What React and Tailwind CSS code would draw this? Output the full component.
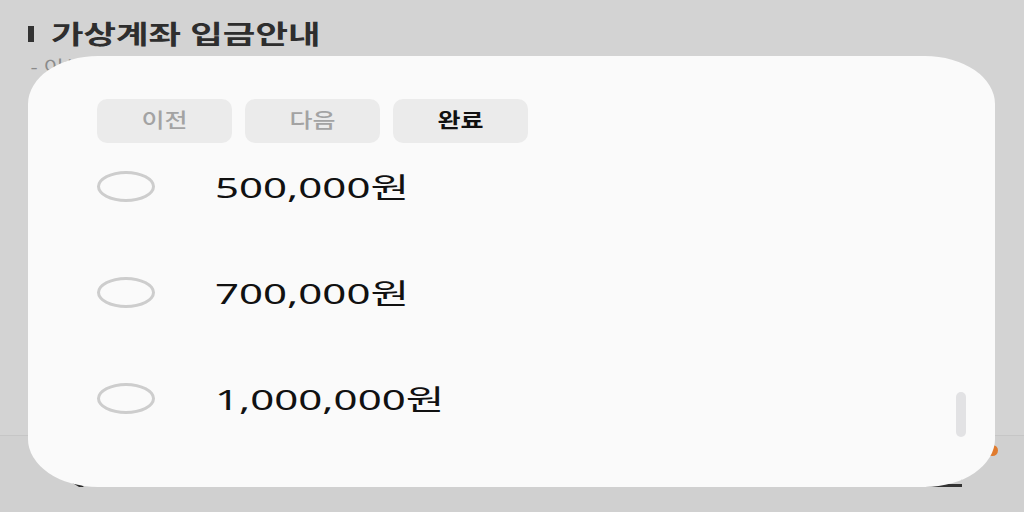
import React from "react";

const amounts = ["500,000원", "700,000원", "1,000,000원"];

function NavBar() {
  return (
    <div className="h-[77px] border-t border-[#c6c6c6] bg-[#d0d0d0] flex items-start pt-[13px] pl-[45px] pr-[30px]">
      <svg width="40" height="38" viewBox="0 0 40 38" className="shrink-0">
        <polyline points="37,6 12,23 37,38" fill="none" stroke="#2b2b2b" strokeWidth="3" strokeLinecap="round" />
      </svg>
      <div className="w-[120px] shrink-0" />
      <div className="w-[6px] h-[38px] flex items-end shrink-0">
        <div className="w-[3px] h-[2px] bg-[#555]" />
      </div>
      <div className="w-[164px] shrink-0" />
      <div className="w-[6px] h-[38px] flex items-end shrink-0">
        <div className="w-[3px] h-[2px] bg-[#777]" />
      </div>
      <div className="w-[105px] shrink-0" />
      <div className="w-[38px] h-[38px] flex items-end shrink-0">
        <div className="w-full h-[3px] bg-[#8a8a8a]" />
      </div>
      <div className="w-[108px] shrink-0" />
      <div className="w-[40px] h-[38px] flex items-end gap-[12px] shrink-0">
        <div className="w-[8px] h-[3px] bg-[#333]" />
        <div className="w-[15px] h-[3px] bg-[#333]" />
      </div>
      <div className="w-[100px] shrink-0" />
      <div className="w-[38px] h-[38px] flex items-end shrink-0">
        <div className="w-full h-[3px] bg-[#8a8a8a]" />
      </div>
      <div className="w-[110px] shrink-0" />
      <div className="relative w-[42px] h-[38px] flex flex-col justify-end gap-[4px] shrink-0">
        <div className="w-full h-[3px] bg-[#333]" />
        <div className="w-full h-[3px] bg-[#333]" />
        <div className="absolute -right-[36px] -top-[4px] w-[11px] h-[11px] rounded-full bg-[#e07b2e]" />
      </div>
    </div>
  );
}

function Radio() {
  return <div className="w-[58px] h-[31px] rounded-[50%] border-[3px] border-[#cdcdcd] shrink-0" />;
}

function Btn({ label, active }) {
  return (
    <div
      className={`w-[135px] h-[44px] rounded-[10px] bg-[#ebebeb] flex items-center justify-center text-[20px] ${active ? "font-bold text-[#111]" : "font-medium text-[#a3a3a3]"}`}
    >
      <span className="scale-x-[1.25] inline-block">{label}</span>
    </div>
  );
}

export default function App() {
  return (
    <div
      className="relative w-[1024px] h-[512px] overflow-hidden bg-[#d3d3d3] flex flex-col"
      style={{ fontFamily: '"Noto Sans", "Noto Sans CJK KR", sans-serif' }}
    >
      <div className="flex-1 pl-[28px] pt-[16px]">
        <div className="flex items-center gap-[17px]">
          <div className="w-[6px] h-[16px] bg-[#333]" />
          <span className="text-[26px] font-bold text-[#2e2e2e] leading-[36px] origin-left scale-x-[1.36] inline-block">
            가상계좌 입금안내
          </span>
        </div>
        <div className="mt-[2px] pl-[2px] text-[17px] text-[#8a8a8a] origin-left scale-x-[1.3]">
          - 이체 시 입금자명을 꼭 확인해 주세요.
        </div>
      </div>
      <NavBar />

      <div className="absolute left-[28px] top-[56px] w-[967px] h-[431px] bg-[#fafafa] rounded-[70px/48px] pl-[69px] pt-[43px]">
        <div className="flex gap-[13px]">
          <Btn label="이전" />
          <Btn label="다음" />
          <Btn label="완료" active />
        </div>
        <div className="flex flex-col mt-[14px]">
          {amounts.map((a) => (
            <div key={a} className="h-[106px] flex items-start pt-[14px]">
              <Radio />
              <span className="ml-[60px] -mt-[4px] text-[28px] leading-[40px] text-[#111] origin-left scale-x-[1.5] inline-block">
                {a}
              </span>
            </div>
          ))}
        </div>
        <div className="absolute left-[928px] top-[336px] w-[10px] h-[45px] rounded-full bg-[#e2e2e4]" />
      </div>
    </div>
  );
}
